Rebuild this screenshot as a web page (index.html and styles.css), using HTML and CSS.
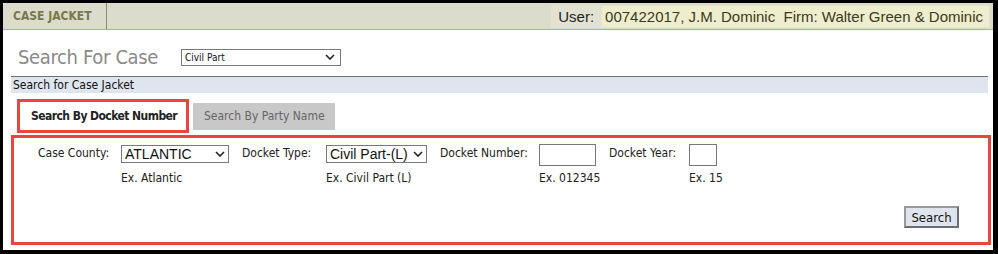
FILE: index.html
```html
<!DOCTYPE html>
<html>
<head>
<meta charset="utf-8">
<link rel="stylesheet" href="styles.css">
</head>
<body>
<div class="frame">
  <div class="topbar">
    <div class="brand">CASE JACKET</div>
    <div class="user">
      <span class="user-label">User:</span>
      <span class="user-value">007422017, J.M. Dominic&nbsp; Firm: Walter Green &amp; Dominic</span>
    </div>
  </div>
  <div class="content">
    <div class="title-row">
      <h1 class="title">Search For Case</h1>
      <div class="select sel-type"><span>Civil Part</span><svg viewBox="0 0 10 6" class="chev"><path d="M1 1 L5 5 L9 1" fill="none" stroke="#222" stroke-width="1.6"/></svg></div>
    </div>
    <div class="section-bar">Search for Case Jacket</div>
    <div class="tabs">
      <div class="tab active">Search By Docket Number</div>
      <div class="tab">Search By Party Name</div>
    </div>
    <div class="panel">
      <div class="grid">
        <div class="lbl">Case County:</div>
        <div class="fld"><div class="select big w108"><span>ATLANTIC</span><svg viewBox="0 0 10 6" class="chev"><path d="M1 1 L5 5 L9 1" fill="none" stroke="#222" stroke-width="1.6"/></svg></div></div>
        <div class="lbl">Docket Type:</div>
        <div class="fld"><div class="select big w101"><span>Civil Part-(L)</span><svg viewBox="0 0 10 6" class="chev"><path d="M1 1 L5 5 L9 1" fill="none" stroke="#222" stroke-width="1.6"/></svg></div></div>
        <div class="lbl">Docket Number:</div>
        <div class="fld"><div class="input w57"></div></div>
        <div class="lbl">Docket Year:</div>
        <div class="fld"><div class="input w28"></div></div>

        <div></div>
        <div class="ex">Ex. Atlantic</div>
        <div></div>
        <div class="ex">Ex. Civil Part (L)</div>
        <div></div>
        <div class="ex">Ex. 012345</div>
        <div></div>
        <div class="ex">Ex. 15</div>
      </div>
      <div class="actions"><button class="btn">Search</button></div>
    </div>
  </div>
</div>
</body>
</html>
```
FILE: styles.css
```css
* { box-sizing: border-box; }
html, body { margin: 0; padding: 0; background: #fff; }
body { font-family: "DejaVu Sans Condensed", "DejaVu Sans", sans-serif; font-stretch: condensed; }

.frame {
  width: 998px;
  height: 254px;
  border-style: solid;
  border-color: #000;
  border-width: 3px 5px 4px 3px;
  background: #fff;
  overflow: hidden;
}

.topbar {
  height: 27px;
  background: #dcdccd;
  border-bottom: 1px solid #9fb0c8;
  display: flex;
  align-items: stretch;
}
.brand {
  width: 104px;
  border-right: 1px solid #8c8c62;
  color: #78784a;
  font-weight: bold;
  font-size: 12px;
  padding-left: 10px;
  display: flex;
  align-items: center;
}
.user {
  margin-left: auto;
  margin-right: 3px;
  margin-top: 2px;
  height: 23px;
  display: flex;
  align-items: center;
  font-family: "Liberation Sans", Arial, sans-serif;
  font-stretch: normal;
  font-size: 15px;
  background: #eeeecf;
  border: 1px solid #e2e2c8;
}
.user-label {
  background: #e2e2d2;
  color: #1f1f1f;
  height: 100%;
  display: flex;
  align-items: center;
  padding: 0 8px 0 6px;
}
.user-value {
  color: #3a3a20;
  padding: 0 6px 0 3px;
}

.content { padding: 0 5px 0 8px; }

.title-row {
  display: flex;
  align-items: center;
  height: 47px;
  padding-top: 8px;
  border-bottom: 1px solid #707070;
}
.title {
  margin: 0 0 0 7px;
  font-weight: normal;
  font-size: 20px;
  color: #8a8a8a;
  width: 163px;
  letter-spacing: -0.35px;
}

.select {
  display: flex;
  align-items: center;
  justify-content: space-between;
  border: 1px solid #7a7a7a;
  background: #fff;
  color: #111;
}
.sel-type {
  width: 160px;
  height: 17px;
  font-size: 10px;
  padding: 0 5px 0 3px;
}
.chev { width: 10px; height: 6px; }
.select.big {
  height: 18px;
  font-family: "Liberation Sans", Arial, sans-serif;
  font-stretch: normal;
  font-size: 14px;
  padding: 0 3px 0 3px;
}
.w108 { width: 108px; }
.w101 { width: 101px; }

.section-bar {
  background: #dfe5ee;
  font-size: 12px;
  color: #111;
  height: 16px;
  line-height: 16px;
  padding-left: 2px;
}

.tabs {
  display: flex;
  align-items: center;
  gap: 4px;
  padding: 4px 0 0 6px;
  height: 42px;
}
.tab {
  width: 142px;
  height: 27px;
  padding: 0 0 0 11px;
  display: flex;
  align-items: center;
  font-size: 12px;
  color: #666;
  background: #c8c8c8;
}
.tab.active {
  width: 172px;
  height: 34px;
  background: #fff;
  color: #222;
  font-weight: bold;
  letter-spacing: -0.55px;
  border: 3px solid #e8473f;
  padding: 0 0 0 11px;
}

.panel {
  border: 3px solid #e8473f;
  height: 110px;
  margin-right: -3px;
  padding: 7px 0 0 24px;
}
.grid {
  display: grid;
  grid-template-columns: 83px 121px 84px 114px 99px 70px 80px auto;
  grid-template-rows: 24px 20px;
  align-items: start;
  font-size: 12px;
  color: #222;
}
.lbl { padding-top: 1px; }
.ex { padding-top: 2px; }
.input {
  border: 1px solid #777;
  height: 22px;
  background: #fff;
  margin-top: -1px;
}
.w57 { width: 57px; }
.w28 { width: 28px; }

.actions {
  display: flex;
  justify-content: flex-end;
  padding-right: 29px;
  margin-top: 17px;
}
.btn {
  font-family: "DejaVu Sans Condensed", "DejaVu Sans", sans-serif;
  font-stretch: condensed;
  font-size: 13px;
  color: #111;
  background: #dfe5ee;
  border: 2px solid #6d6d6d;
  border-top-color: #999;
  border-left-color: #999;
  height: 22px;
  width: 55px;
  padding: 0;
}
```
